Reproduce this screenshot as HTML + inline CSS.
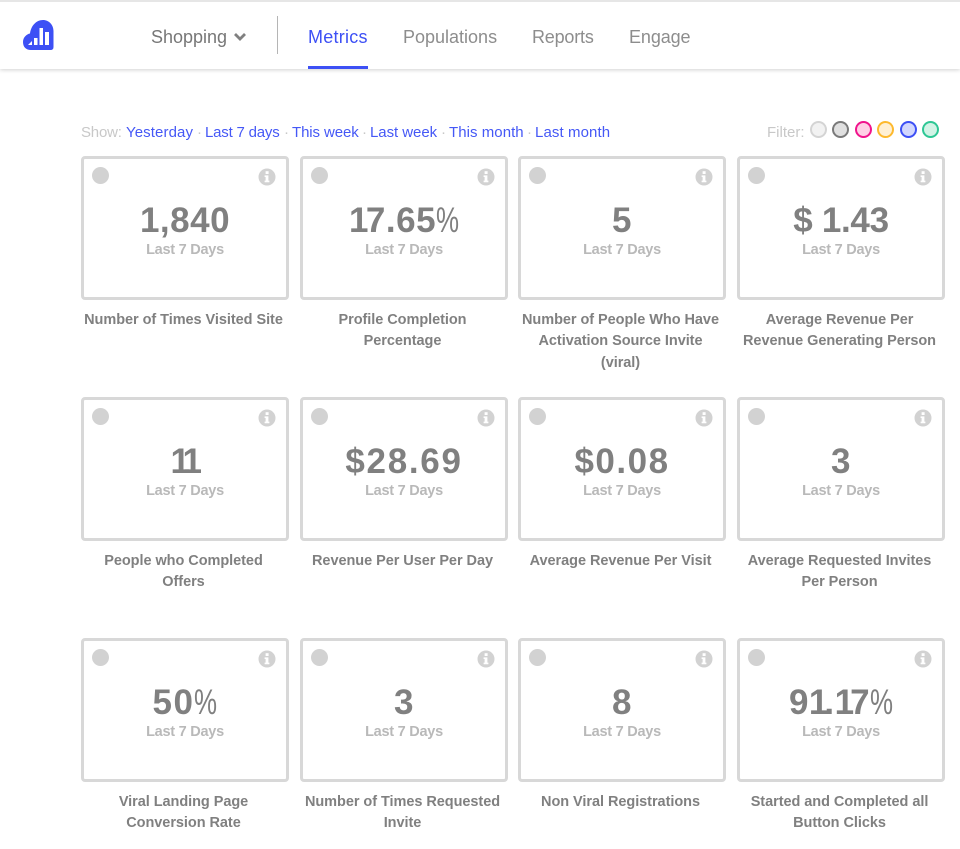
<!DOCTYPE html>
<html><head><meta charset="utf-8"><style>
html,body{margin:0;padding:0;background:#fff}
body{width:960px;height:849px;position:relative;overflow:hidden;font-family:"Liberation Sans",sans-serif}
.a{position:absolute;white-space:nowrap}
#top{position:absolute;left:0;top:0;width:960px;height:69px;background:#fff;border-top:2px solid #e6e6e6;box-sizing:border-box;box-shadow:0 1px 4px rgba(0,0,0,.18)}
.n{font-size:18px;color:#8d8d8d;top:27px;letter-spacing:0}
.s{top:124px;font-size:15px;color:#4558f6}
.p{top:124px;font-size:15px;color:#c8c8c8}
.dot{position:absolute;top:121px;width:13px;height:13px;border-radius:50%;border-width:2px;border-style:solid}
.c{position:absolute;width:208px;height:144px;box-sizing:border-box;border:3px solid #d8d8d8;border-radius:4px;background:#fff}
.c i{position:absolute;left:8px;top:8px;width:17px;height:17px;border-radius:50%;background:#d2d2d2}
.c svg{position:absolute;left:174px;top:8.5px}
.v{position:absolute;left:0;right:0;top:41.5px;text-align:center;font-size:35px;font-weight:700;color:#808080;line-height:40px;letter-spacing:.5px}
.v b{font-weight:400;display:inline-block;width:23px;transform:scaleX(.74);transform-origin:left;text-align:left;letter-spacing:0}
.v u{text-decoration:none;letter-spacing:-2.5px}
.d{position:absolute;left:0;right:0;top:82.5px;text-align:center;font-size:14.5px;font-weight:700;color:#b9b9b9;line-height:17px;letter-spacing:-.25px}
.l{position:absolute;width:208px;text-align:center;font-size:14.5px;font-weight:700;color:#808080;line-height:21.3px;margin-left:-1.5px;letter-spacing:-.05px}
</style></head><body>
<div id="top"></div>
<svg class="a" style="left:22px;top:19px" width="33" height="33" viewBox="22 19 33 33"><path d="M23 42C23 37 27 34 30 33.5C31 26 36 20 43 20C49 20 53.5 25 53.5 31V47Q53.5 50 50.5 50H31C26 50 23 47 23 42Z" fill="#3d50f5"/><path d="M28 45L32 41V45Z" fill="#fff"/><rect x="34" y="38" width="3.5" height="7" fill="#fff"/><rect x="39.5" y="28" width="3.5" height="17" fill="#fff"/><rect x="45" y="32" width="4" height="13" fill="#fff"/></svg>
<div class="a n" style="left:151px;color:#777">Shopping</div>
<svg class="a" style="left:233px;top:32px" width="14" height="10" viewBox="0 0 14 10"><path d="M2 2L7 7L12 2" fill="none" stroke="#808080" stroke-width="2.8"/></svg>
<div class="a" style="left:276.5px;top:16px;width:1.5px;height:38px;background:#b5b5b5"></div>
<div class="a n" style="left:308px;color:#3d50f5;letter-spacing:.25px">Metrics</div>
<div class="a" style="left:308px;top:66px;width:60px;height:3px;background:#3d50f5"></div>
<div class="a n" style="left:403px">Populations</div>
<div class="a n" style="left:532px;letter-spacing:-.2px">Reports</div>
<div class="a n" style="left:629px;letter-spacing:-.1px">Engage</div>

<div class="a p" style="left:81px;letter-spacing:-.2px">Show:</div>
<div class="a s" style="left:126px;letter-spacing:.1px">Yesterday</div>
<div class="a p" style="left:197px">·</div>
<div class="a s" style="left:205px;letter-spacing:-.2px">Last 7 days</div>
<div class="a p" style="left:284px">·</div>
<div class="a s" style="left:292px;letter-spacing:-.1px">This week</div>
<div class="a p" style="left:362px">·</div>
<div class="a s" style="left:370px;letter-spacing:-.05px">Last week</div>
<div class="a p" style="left:441px">·</div>
<div class="a s" style="left:449px;letter-spacing:.05px">This month</div>
<div class="a p" style="left:527px">·</div>
<div class="a s" style="left:535px;letter-spacing:.1px">Last month</div>
<div class="a p" style="left:767px">Filter:</div>
<div class="dot" style="left:810px;background:#f2f2f2;border-color:#d4d4d4"></div>
<div class="dot" style="left:832px;background:#e0e0e0;border-color:#7a7a7a"></div>
<div class="dot" style="left:855px;background:#ffd0e6;border-color:#f0148c"></div>
<div class="dot" style="left:877px;background:#fff0d4;border-color:#fdb92e"></div>
<div class="dot" style="left:900px;background:#d2d7fd;border-color:#3d50f5"></div>
<div class="dot" style="left:922px;background:#d2f3e6;border-color:#2ec795"></div>

<div class="c" style="left:81px;top:156px"><i></i><svg width="18" height="18" viewBox="0 0 18 18"><circle cx="9" cy="9" r="8.5" fill="#d2d2d2"/><rect x="7.6" y="3.2" width="3" height="2.8" fill="#fff"/><path d="M6.6 7.4H10.4V12.6H11.4V14.2H6.6V12.6H7.6V9H6.6Z" fill="#fff"/></svg><div class="v">1,840</div><div class="d">Last 7 Days</div></div>
<div class="c" style="left:300px;top:156px"><i></i><svg width="18" height="18" viewBox="0 0 18 18"><circle cx="9" cy="9" r="8.5" fill="#d2d2d2"/><rect x="7.6" y="3.2" width="3" height="2.8" fill="#fff"/><path d="M6.6 7.4H10.4V12.6H11.4V14.2H6.6V12.6H7.6V9H6.6Z" fill="#fff"/></svg><div class="v"><u>1</u>7.65<b>%</b></div><div class="d">Last 7 Days</div></div>
<div class="c" style="left:518px;top:156px"><i></i><svg width="18" height="18" viewBox="0 0 18 18"><circle cx="9" cy="9" r="8.5" fill="#d2d2d2"/><rect x="7.6" y="3.2" width="3" height="2.8" fill="#fff"/><path d="M6.6 7.4H10.4V12.6H11.4V14.2H6.6V12.6H7.6V9H6.6Z" fill="#fff"/></svg><div class="v">5</div><div class="d">Last 7 Days</div></div>
<div class="c" style="left:737px;top:156px"><i></i><svg width="18" height="18" viewBox="0 0 18 18"><circle cx="9" cy="9" r="8.5" fill="#d2d2d2"/><rect x="7.6" y="3.2" width="3" height="2.8" fill="#fff"/><path d="M6.6 7.4H10.4V12.6H11.4V14.2H6.6V12.6H7.6V9H6.6Z" fill="#fff"/></svg><div class="v" style="letter-spacing:-.3px">$ 1.43</div><div class="d">Last 7 Days</div></div>

<div class="c" style="left:81px;top:397px"><i></i><svg width="18" height="18" viewBox="0 0 18 18"><circle cx="9" cy="9" r="8.5" fill="#d2d2d2"/><rect x="7.6" y="3.2" width="3" height="2.8" fill="#fff"/><path d="M6.6 7.4H10.4V12.6H11.4V14.2H6.6V12.6H7.6V9H6.6Z" fill="#fff"/></svg><div class="v" style="letter-spacing:-5.5px;left:-3px">11</div><div class="d">Last 7 Days</div></div>
<div class="c" style="left:300px;top:397px"><i></i><svg width="18" height="18" viewBox="0 0 18 18"><circle cx="9" cy="9" r="8.5" fill="#d2d2d2"/><rect x="7.6" y="3.2" width="3" height="2.8" fill="#fff"/><path d="M6.6 7.4H10.4V12.6H11.4V14.2H6.6V12.6H7.6V9H6.6Z" fill="#fff"/></svg><div class="v" style="letter-spacing:1.7px">$28.69</div><div class="d">Last 7 Days</div></div>
<div class="c" style="left:518px;top:397px"><i></i><svg width="18" height="18" viewBox="0 0 18 18"><circle cx="9" cy="9" r="8.5" fill="#d2d2d2"/><rect x="7.6" y="3.2" width="3" height="2.8" fill="#fff"/><path d="M6.6 7.4H10.4V12.6H11.4V14.2H6.6V12.6H7.6V9H6.6Z" fill="#fff"/></svg><div class="v" style="letter-spacing:1.5px">$0.08</div><div class="d">Last 7 Days</div></div>
<div class="c" style="left:737px;top:397px"><i></i><svg width="18" height="18" viewBox="0 0 18 18"><circle cx="9" cy="9" r="8.5" fill="#d2d2d2"/><rect x="7.6" y="3.2" width="3" height="2.8" fill="#fff"/><path d="M6.6 7.4H10.4V12.6H11.4V14.2H6.6V12.6H7.6V9H6.6Z" fill="#fff"/></svg><div class="v">3</div><div class="d">Last 7 Days</div></div>

<div class="c" style="left:81px;top:638px"><i></i><svg width="18" height="18" viewBox="0 0 18 18"><circle cx="9" cy="9" r="8.5" fill="#d2d2d2"/><rect x="7.6" y="3.2" width="3" height="2.8" fill="#fff"/><path d="M6.6 7.4H10.4V12.6H11.4V14.2H6.6V12.6H7.6V9H6.6Z" fill="#fff"/></svg><div class="v" style="letter-spacing:1.5px">50<b>%</b></div><div class="d">Last 7 Days</div></div>
<div class="c" style="left:300px;top:638px"><i></i><svg width="18" height="18" viewBox="0 0 18 18"><circle cx="9" cy="9" r="8.5" fill="#d2d2d2"/><rect x="7.6" y="3.2" width="3" height="2.8" fill="#fff"/><path d="M6.6 7.4H10.4V12.6H11.4V14.2H6.6V12.6H7.6V9H6.6Z" fill="#fff"/></svg><div class="v">3</div><div class="d">Last 7 Days</div></div>
<div class="c" style="left:518px;top:638px"><i></i><svg width="18" height="18" viewBox="0 0 18 18"><circle cx="9" cy="9" r="8.5" fill="#d2d2d2"/><rect x="7.6" y="3.2" width="3" height="2.8" fill="#fff"/><path d="M6.6 7.4H10.4V12.6H11.4V14.2H6.6V12.6H7.6V9H6.6Z" fill="#fff"/></svg><div class="v">8</div><div class="d">Last 7 Days</div></div>
<div class="c" style="left:737px;top:638px"><i></i><svg width="18" height="18" viewBox="0 0 18 18"><circle cx="9" cy="9" r="8.5" fill="#d2d2d2"/><rect x="7.6" y="3.2" width="3" height="2.8" fill="#fff"/><path d="M6.6 7.4H10.4V12.6H11.4V14.2H6.6V12.6H7.6V9H6.6Z" fill="#fff"/></svg><div class="v">9<u style="letter-spacing:-4px">1</u>.<u style="letter-spacing:-4px">1</u>7<b>%</b></div><div class="d">Last 7 Days</div></div>

<div class="l" style="left:81px;top:310px">Number of Times Visited Site</div>
<div class="l" style="left:300px;top:310px">Profile Completion<br>Percentage</div>
<div class="l" style="left:518px;top:310px">Number of People Who Have<br>Activation Source Invite<br>(viral)</div>
<div class="l" style="left:737px;top:310px">Average Revenue Per<br>Revenue Generating Person</div>
<div class="l" style="left:81px;top:551px">People who Completed<br>Offers</div>
<div class="l" style="left:300px;top:551px">Revenue Per User Per Day</div>
<div class="l" style="left:518px;top:551px">Average Revenue Per Visit</div>
<div class="l" style="left:737px;top:551px">Average Requested Invites<br>Per Person</div>
<div class="l" style="left:81px;top:792px">Viral Landing Page<br>Conversion Rate</div>
<div class="l" style="left:300px;top:792px">Number of Times Requested<br>Invite</div>
<div class="l" style="left:518px;top:792px">Non Viral Registrations</div>
<div class="l" style="left:737px;top:792px">Started and Completed all<br>Button Clicks</div>
</body></html>
